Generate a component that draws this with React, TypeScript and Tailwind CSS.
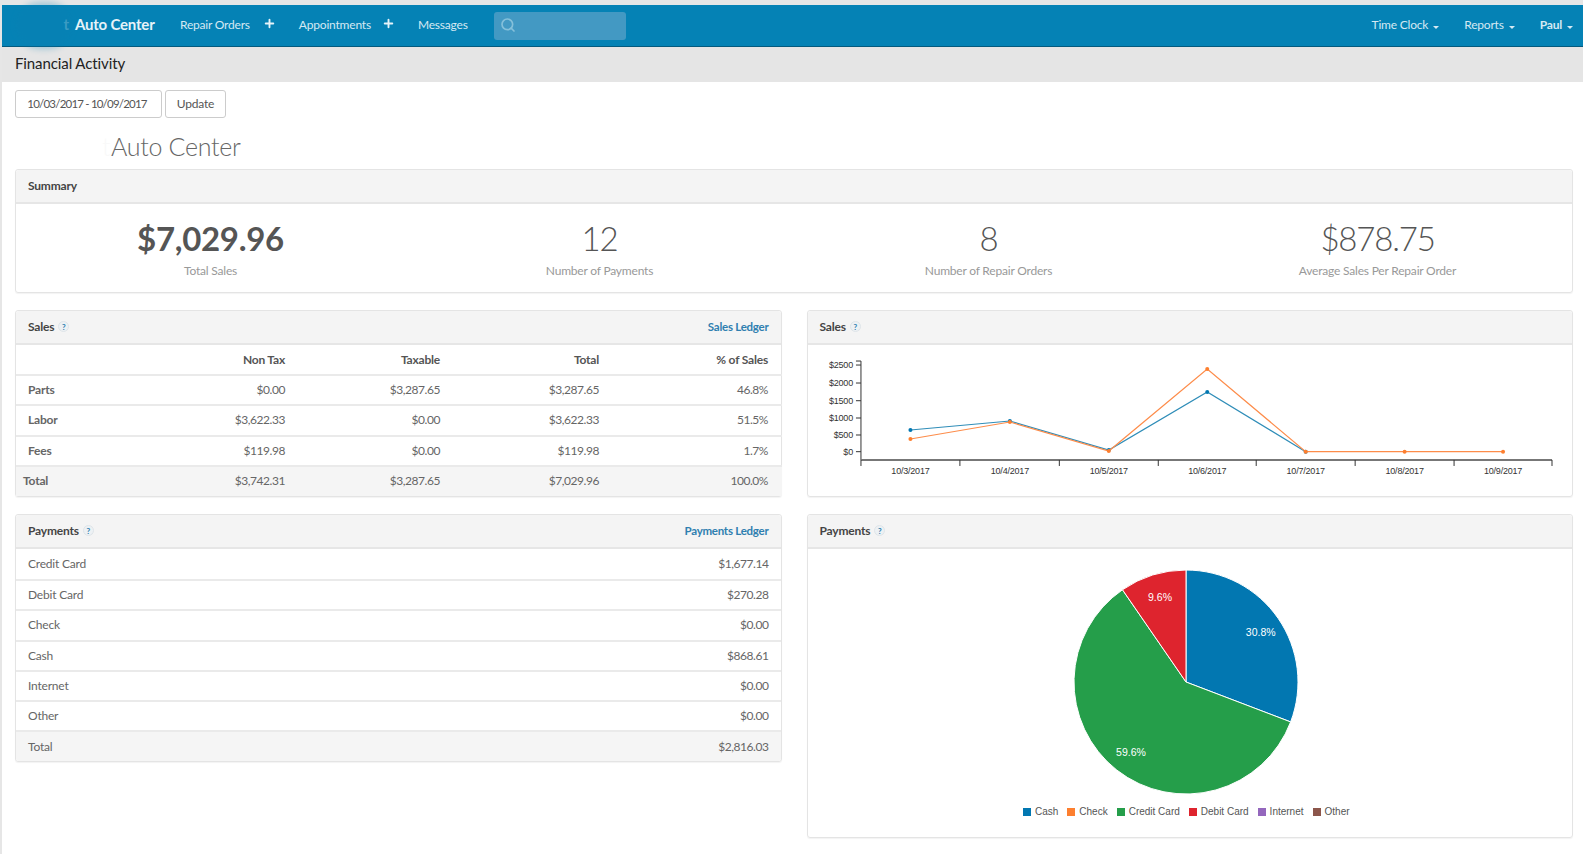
import { Plus, Search } from "lucide-react";

const salesRows = [
  { name: "Parts", nonTax: "$0.00", taxable: "$3,287.65", total: "$3,287.65", pct: "46.8%" },
  { name: "Labor", nonTax: "$3,622.33", taxable: "$0.00", total: "$3,622.33", pct: "51.5%" },
  { name: "Fees", nonTax: "$119.98", taxable: "$0.00", total: "$119.98", pct: "1.7%" },
];

const paymentRows = [
  { name: "Credit Card", amount: "$1,677.14" },
  { name: "Debit Card", amount: "$270.28" },
  { name: "Check", amount: "$0.00" },
  { name: "Cash", amount: "$868.61" },
  { name: "Internet", amount: "$0.00" },
  { name: "Other", amount: "$0.00" },
];

const summary = [
  { value: "$7,029.96", label: "Total Sales", bold: true },
  { value: "12", label: "Number of Payments" },
  { value: "8", label: "Number of Repair Orders" },
  { value: "$878.75", label: "Average Sales Per Repair Order" },
];

const legend = [
  { name: "Cash", swatch: "bg-[#0277b1]" },
  { name: "Check", swatch: "bg-[#fd7f2f]" },
  { name: "Credit Card", swatch: "bg-[#259e4a]" },
  { name: "Debit Card", swatch: "bg-[#de242e]" },
  { name: "Internet", swatch: "bg-[#9467bd]" },
  { name: "Other", swatch: "bg-[#8c564b]" },
];

function Help() {
  return (
    <span className="ml-[4px] inline-flex h-[11px] w-[11px] items-center justify-center rounded-full border border-[#dfe5e9] bg-[#edf1f4] text-[8px] font-bold leading-none tracking-normal text-[#2f7fb0]">
      ?
    </span>
  );
}

function PanelHeader({ title, help, link }: { title: string; help?: boolean; link?: string }) {
  return (
    <div className="flex h-[34px] items-center justify-between rounded-t-[3px] border-b-2 border-[#e6e6e6] bg-[#f4f4f4] pb-[1px] pl-[12px] pr-[12px]">
      <div className="flex items-center text-[12px] font-bold text-[#444]">
        {title}
        {help && <Help />}
      </div>
      {link && <a className="text-[11.5px] font-bold tracking-[-0.25px] text-[#2f7fb0]">{link}</a>}
    </div>
  );
}

function Caret() {
  return <span className="ml-[5px] inline-block border-x-[3px] border-t-[3px] border-x-transparent border-t-[#d5e9f3]" />;
}

function NavBar() {
  return (
    <div className="relative flex h-[42px] items-center border-b border-[#045a7e] bg-[#0582b5] pb-[2px] text-[12px] text-[#d5e9f3]">
      {/* blurred-out logo, spills just past the bar */}
      <div className="absolute left-[14px] top-[-3px] h-[47px] w-[56px] rounded-full bg-[#0b80b2] opacity-30 blur-[3px]" />
      <div className="relative w-[73px] pr-[6px] text-right text-[15px] font-bold text-[#3a9bc3]">t</div>
      <div className="w-[105px] text-[15px] font-bold text-[#e6f3f9]">Auto Center</div>
      <span>Repair Orders</span>
      <Plus size={13} strokeWidth={3.5} className="ml-[13px] mr-[23px] mb-[2px] text-[#e6f3f9]" />
      <span>Appointments</span>
      <Plus size={13} strokeWidth={3.5} className="ml-[11px] mr-[23px] mb-[2px] text-[#e6f3f9]" />
      <span>Messages</span>
      <div className="ml-[26px] mt-[2px] flex h-[28px] w-[132px] items-center rounded-[3px] bg-[#4399c3] pb-[2px] pl-[6px]">
        <Search size={16} strokeWidth={2.5} className="text-[#85c0da]" />
      </div>
      <div className="ml-auto flex items-center gap-[25px] pr-[10px]">
        <span>Time Clock<Caret /></span>
        <span>Reports<Caret /></span>
        <span className="font-bold">Paul<Caret /></span>
      </div>
    </div>
  );
}

function SalesTable() {
  const cell = "border-t-2 border-[#eaeaea] pr-[14px] text-right tracking-[-0.45px]";
  const head = "pr-[14px] text-right";
  return (
    <table className="w-full table-fixed border-collapse text-[12px] text-[#666]">
      <colgroup>
        <col className="w-[130px]" />
        <col className="w-[153px]" />
        <col className="w-[155px]" />
        <col className="w-[159px]" />
        <col className="w-[169px]" />
      </colgroup>
      <thead>
        <tr className="h-[30px] font-bold text-[#555]">
          <th></th>
          <th className={head}>Non Tax</th>
          <th className={head}>Taxable</th>
          <th className={head}>Total</th>
          <th className={head}>% of Sales</th>
        </tr>
      </thead>
      <tbody>
        {salesRows.map((row) => (
          <tr key={row.name} className="h-[30.3px]">
            <td className="border-t-2 border-[#eaeaea] pl-[12px] font-bold">{row.name}</td>
            <td className={cell}>{row.nonTax}</td>
            <td className={cell}>{row.taxable}</td>
            <td className={cell}>{row.total}</td>
            <td className={cell}>{row.pct}</td>
          </tr>
        ))}
        <tr className="h-[30px] bg-[#f5f5f5]">
          <td className="border-t-2 border-[#eaeaea] pl-[7px] font-bold">Total</td>
          <td className={cell}>$3,742.31</td>
          <td className={cell}>$3,287.65</td>
          <td className={cell}>$7,029.96</td>
          <td className={cell}>100.0%</td>
        </tr>
      </tbody>
    </table>
  );
}

function PaymentsTable() {
  return (
    <div className="text-[12px] text-[#666]">
      {paymentRows.map((row, index) => (
        <div
          key={row.name}
          className={`flex h-[30.2px] items-center justify-between pl-[12px] pr-[12px] ${index > 0 ? "border-t-2 border-[#eaeaea]" : ""}`}
        >
          <span>{row.name}</span>
          <span className="tracking-[-0.45px]">{row.amount}</span>
        </div>
      ))}
      <div className="flex h-[31px] items-center justify-between rounded-b-[3px] border-t-2 border-[#eaeaea] bg-[#f5f5f5] pl-[12px] pr-[12px]">
        <span>Total</span>
        <span className="tracking-[-0.45px]">$2,816.03</span>
      </div>
    </div>
  );
}

function SalesChart() {
  const blue = "910.5,430 1010,421 1109,450 1207.5,392 1306,451.7";
  const orange = "910.5,439 1010,422 1109,451 1207.5,369 1306,451.7 1405,451.7 1503.5,451.7";
  const toPoints = (s: string) => s.split(" ").map((p) => p.split(",").map(Number));
  const yTicks = [
    { label: "$2500", y: 365 },
    { label: "$2000", y: 383 },
    { label: "$1500", y: 400.7 },
    { label: "$1000", y: 418 },
    { label: "$500", y: 435 },
    { label: "$0", y: 451.7 },
  ];
  const xTicks = [861, 960, 1059.5, 1158.5, 1256.5, 1355.5, 1454.5, 1552.5];
  const xLabels = [
    { label: "10/3/2017", x: 910.5 },
    { label: "10/4/2017", x: 1010 },
    { label: "10/5/2017", x: 1109 },
    { label: "10/6/2017", x: 1207.5 },
    { label: "10/7/2017", x: 1306 },
    { label: "10/8/2017", x: 1405 },
    { label: "10/9/2017", x: 1503.5 },
  ];
  return (
    <svg viewBox="808 345 765 151" className="block h-[151px] w-full" fontFamily="'Liberation Sans', sans-serif" fontSize="9" fill="#333">
      <path d="M856 361H861V460" fill="none" stroke="#333" strokeWidth="1" />
      <path d="M861 460H1552.5" stroke="#777" strokeWidth="2" />
      {yTicks.map((t) => (
        <g key={t.label}>
          <line x1="856" x2="861" y1={t.y} y2={t.y} stroke="#333" />
          <text x="853" y={t.y + 3} textAnchor="end">{t.label}</text>
        </g>
      ))}
      {xTicks.map((x) => (
        <line key={x} x1={x} x2={x} y1="460" y2="466" stroke="#333" />
      ))}
      {xLabels.map((t) => (
        <text key={t.label} x={t.x} y="474" textAnchor="middle">{t.label}</text>
      ))}
      <polyline points={blue} fill="none" stroke="#2f8db8" strokeWidth="1.2" />
      {toPoints(blue).map(([x, y]) => (
        <circle key={x} cx={x} cy={y} r="2" fill="#0277b1" />
      ))}
      <polyline points={orange} fill="none" stroke="#fd8c4a" strokeWidth="1.2" />
      {toPoints(orange).map(([x, y]) => (
        <circle key={x} cx={x} cy={y} r="2" fill="#fd7f2f" />
      ))}
    </svg>
  );
}

function PaymentsPie() {
  const r = 112;
  const point = (fraction: number) => {
    const a = fraction * 2 * Math.PI;
    return `${(r * Math.sin(a)).toFixed(2)} ${(-r * Math.cos(a)).toFixed(2)}`;
  };
  const slice = (from: number, to: number) =>
    `M0 0L${point(from)}A${r} ${r} 0 ${to - from > 0.5 ? 1 : 0} 1 ${point(to)}Z`;
  return (
    <div className="flex flex-col items-center pb-[19px] pr-[7px] tracking-normal">
      <svg viewBox="-150 -133 300 246" className="block h-[246px] w-[300px]" fontFamily="'Liberation Sans', sans-serif" fontSize="10.5" fill="#fff" textAnchor="middle">
        <path d={slice(0, 0.308)} fill="#0277b1" stroke="#fff" strokeWidth="1" />
        <path d={slice(0.308, 0.904)} fill="#259e4a" stroke="#fff" strokeWidth="1" />
        <path d={slice(0.904, 1)} fill="#de242e" stroke="#fff" strokeWidth="1" />
        <text x="74.7" y="-46.5">30.8%</text>
        <text x="-26" y="-81.5">9.6%</text>
        <text x="-55" y="74">59.6%</text>
      </svg>
      <div className="mt-[11px] flex gap-[9px] font-['Liberation_Sans',sans-serif] text-[10px] leading-[12px] text-[#555]">
        {legend.map((item) => (
          <div key={item.name} className="flex items-center gap-[4px]">
            <span className={`h-[8px] w-[8px] ${item.swatch}`} />
            {item.name}
          </div>
        ))}
      </div>
    </div>
  );
}

const panel = "rounded-[3px] border border-[#e4e4e4] shadow-[0_1px_1px_rgba(0,0,0,0.05)]";

export default function App() {
  return (
    <div className="min-h-[854px] border-l-2 border-t-[5px] border-[#e6e6e6] bg-white font-['Lato',sans-serif] tracking-[-0.2px]">
      <NavBar />
      <div className="flex h-[35px] items-center bg-[#e5e5e5] pb-[2px] pl-[13px] text-[15px] tracking-[-0.1px] text-[#222]">Financial Activity</div>

      <div className="pl-[13px] pr-[10px]">
        <div className="mt-[8px] flex gap-[3px] text-[12px] text-[#555]">
          <div className="flex h-[28px] w-[147px] items-center justify-center rounded-[3px] border border-[#ccc] pr-[3px] text-[11.5px] tracking-[-0.8px]">10/03/2017 - 10/09/2017</div>
          <div className="flex h-[28px] w-[61px] items-center justify-center rounded-[3px] border border-[#ccc] pb-[1px]">Update</div>
        </div>

        <div className="mt-[13px] flex h-[32px] items-center pl-[87px] text-[25px] font-light tracking-[-0.3px] text-[#666]">
          <span className="w-[9px] text-[#f9f9f9]">t</span>
          Auto Center
        </div>

        <div className={`mt-[6px] ${panel}`}>
          <PanelHeader title="Summary" />
          <div className="grid h-[88px] grid-cols-4">
            {summary.map((item) => (
              <div key={item.label} className="flex flex-col items-center pt-[13px]">
                <div className={`text-[33px] leading-[42px] text-[#555] ${item.bold ? "font-bold tracking-[-0.3px]" : "font-light tracking-[-1.2px]"}`}>{item.value}</div>
                <div className="mt-[3px] text-[12px] text-[#999]">{item.label}</div>
              </div>
            ))}
          </div>
        </div>

        <div className="mt-[17px] grid grid-cols-2 items-start gap-x-[25px] gap-y-[17px]">
          <div className={panel}>
            <PanelHeader title="Sales" help link="Sales Ledger" />
            <SalesTable />
          </div>
          <div className={panel}>
            <PanelHeader title="Sales" help />
            <SalesChart />
          </div>
          <div className={panel}>
            <PanelHeader title="Payments" help link="Payments Ledger" />
            <PaymentsTable />
          </div>
          <div className={panel}>
            <PanelHeader title="Payments" help />
            <PaymentsPie />
          </div>
        </div>
      </div>
    </div>
  );
}
